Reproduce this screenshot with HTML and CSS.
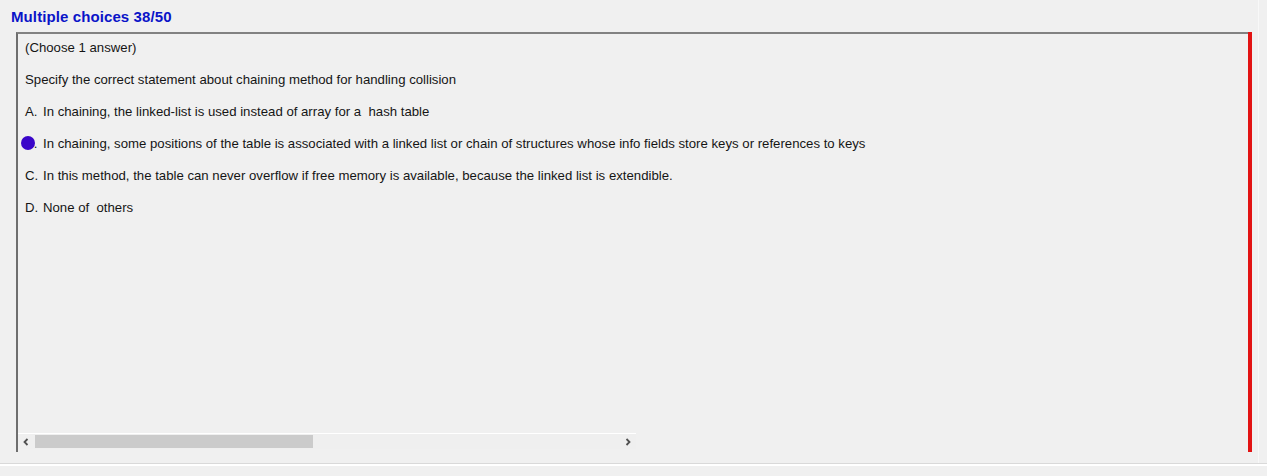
FILE: index.html
```html
<!DOCTYPE html>
<html>
<head>
<meta charset="utf-8">
<link rel="stylesheet" href="styles.css">
</head>
<body>
<div class="window">
  <div class="main">
    <div class="title">Multiple choices 38/50</div>
    <div class="panel">
      <div class="content">
        <div class="text-area">
          <div class="line">(Choose 1 answer)</div>
          <div class="line">Specify the correct statement about chaining method for handling collision</div>
          <div class="line option"><span class="label">A.</span><span>In chaining, the linked-list is used instead of array for a&nbsp; hash table</span></div>
          <div class="line option"><span class="label selected">B.<span class="dot"></span></span><span>In chaining, some positions of the table is associated with a linked list or chain of structures whose info fields store keys or references to keys</span></div>
          <div class="line option"><span class="label">C.</span><span>In this method, the table can never overflow if free memory is available, because the linked list is extendible.</span></div>
          <div class="line option"><span class="label">D.</span><span>None of&nbsp; others</span></div>
        </div>
        <div class="hscroll">
          <div class="arrow left">
            <svg width="8" height="8" viewBox="0 0 8 8"><path d="M5.5 1 L2.5 4 L5.5 7" fill="none" stroke="#505050" stroke-width="1.8"/></svg>
          </div>
          <div class="track"><div class="thumb"></div></div>
          <div class="arrow right">
            <svg width="8" height="8" viewBox="0 0 8 8"><path d="M2.5 1 L5.5 4 L2.5 7" fill="none" stroke="#505050" stroke-width="1.8"/></svg>
          </div>
        </div>
      </div>
      <div class="redbar"></div>
    </div>
  </div>
  <div class="footer"></div>
</div>
</body>
</html>
```
FILE: styles.css
```css
html, body {
  margin: 0;
  padding: 0;
}
body {
  background: #f0f0f0;
  font-family: "Liberation Sans", Arial, sans-serif;
  width: 1267px;
  height: 476px;
  overflow: hidden;
}
.window {
  display: flex;
  flex-direction: column;
  height: 476px;
}
.main {
  height: 464px;
  border-right: 1px solid #f8f8f8;
  width: 1259px;
  box-sizing: border-box;
}
.title {
  color: #0a14c8;
  font-weight: bold;
  font-size: 15px;
  letter-spacing: 0.1px;
  line-height: 16px;
  padding: 9px 0 0 11px;
  height: 23px;
}
.panel {
  display: flex;
  margin-left: 16px;
  height: 420px;
}
.content {
  width: 1230px;
  display: flex;
  flex-direction: column;
  border-top: 2px solid #828282;
  border-left: 2px solid #6e6e6e;
}
.text-area {
  flex: 1;
  padding: 6px 0 0 7px;
  font-size: 13.2px;
  color: #151515;
}
.line {
  line-height: 16px;
  height: 16px;
  margin-bottom: 16px;
  white-space: nowrap;
}
.option {
  display: flex;
}
.label {
  width: 18px;
  flex: none;
  position: relative;
}
.dot {
  position: absolute;
  left: -4px;
  top: 0;
  width: 14px;
  height: 14px;
  border-radius: 50%;
  background: #3a06c9;
}
.hscroll {
  display: flex;
  height: 15px;
  width: 618px;
  margin-bottom: 3px;
  border-top: 1px solid #ffffff;
  background: #efefef;
}
.arrow {
  width: 16px;
  display: flex;
  align-items: center;
  justify-content: center;
}
.track {
  flex: 1;
  display: flex;
  align-items: stretch;
  padding: 1px 0 1px 1px;
}
.thumb {
  width: 278px;
  background: #cbcbcb;
}
.redbar {
  width: 4px;
  background: #e21313;
}
.footer {
  border-top: 2px solid #ffffff;
  box-shadow: 0 -1px 0 #d9d9d9;
  flex: 1;
  background: #f0f0f0;
}
```
